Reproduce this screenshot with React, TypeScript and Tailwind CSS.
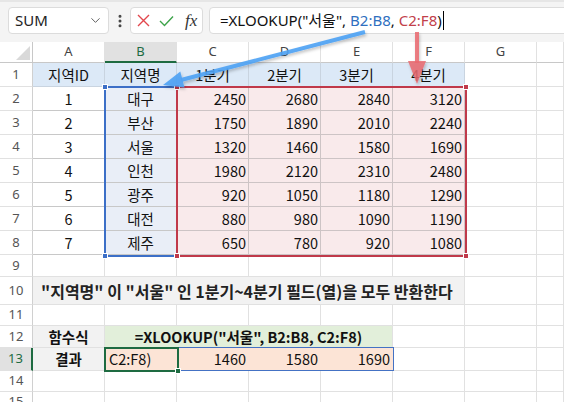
import React from "react";
import { ChevronDown, EllipsisVertical } from "lucide-react";

const rows: [number, string, number, number, number, number][] = [
  [1, "대구", 2450, 2680, 2840, 3120],
  [2, "부산", 1750, 1890, 2010, 2240],
  [3, "서울", 1320, 1460, 1580, 1690],
  [4, "인천", 1980, 2120, 2310, 2480],
  [5, "광주", 920, 1050, 1180, 1290],
  [6, "대전", 880, 980, 1090, 1190],
  [7, "제주", 650, 780, 920, 1080],
];

function RowHead({ n, active = false }: { n: number; active?: boolean }) {
  return (
    <div
      className={`w-[33px] shrink-0 flex items-center justify-center border-b border-b-[#e1e1e1] text-[13px] font-['Noto_Sans',sans-serif] ${
        active
          ? "bg-[#e1e1e1] text-[#1e6b41] border-r-2 border-r-[#1e6b41]"
          : "bg-white text-[#555] border-r border-r-[#d0d0d0]"
      }`}
    >
      {n}
    </div>
  );
}

function Blank({ last = false }: { last?: boolean }) {
  return (
    <div
      className={`${last ? "flex-1" : "w-[72px] shrink-0"} border-r border-b border-r-[#e1e1e1] border-b-[#e1e1e1] bg-white`}
    />
  );
}

function Blanks({ n }: { n: number }) {
  const arr = Array.from({ length: n });
  return (
    <>
      {arr.map((_, i) => (
        <Blank key={i} last={i === n - 1} />
      ))}
    </>
  );
}

function BlankRow({ n, h }: { n: number; h: string }) {
  return (
    <div className={`flex ${h}`}>
      <RowHead n={n} />
      <Blanks n={8} />
    </div>
  );
}

function HeadLetter({ l, active = false, last = false }: { l: string; active?: boolean; last?: boolean }) {
  return (
    <div
      className={`${last ? "flex-1" : "w-[72px] shrink-0"} flex items-center justify-center border-r border-r-[#e1e1e1] text-[13px] font-['Noto_Sans',sans-serif] ${
        active
          ? "bg-[#e1e1e1] text-[#1e6b41] border-b-2 border-b-[#1e6b41]"
          : "bg-white text-[#444] border-b border-b-[#c8c8c8]"
      }`}
    >
      {l}
    </div>
  );
}

export default function App() {
  return (
    <div className="relative w-[564px] h-[402px] overflow-hidden bg-white font-['Noto_Sans_CJK_KR',sans-serif] text-[#111]">
      {/* Formula bar */}
      <div className="h-[42px] bg-[#f4f4f4] border-t-2 border-t-[#e6e6e6] flex items-start pt-[5px] pl-[8px]">
        <div className="w-[101px] h-[27px] shrink-0 bg-white border border-[#dcdcdc] rounded-[4px] flex items-center justify-between pl-[6px] pr-[5px]">
          <span className="text-[15px] text-[#222] font-['Noto_Sans',sans-serif] leading-none">SUM</span>
          <ChevronDown size={15} strokeWidth={1.5} className="text-[#555]" />
        </div>
        <div className="w-[21px] h-[27px] shrink-0 flex items-center justify-center">
          <EllipsisVertical size={16} strokeWidth={2.5} className="text-[#444]" />
        </div>
        <div className="w-[73px] h-[27px] shrink-0 bg-white border border-[#dcdcdc] rounded-[4px] flex items-center pl-[6px] gap-[9px]">
          <svg width="13" height="13" viewBox="0 0 13 13">
            <path d="M1 1 L12 12 M12 1 L1 12" stroke="#e2474d" strokeWidth="1.4" fill="none" />
          </svg>
          <svg width="15" height="12" viewBox="0 0 15 12">
            <path d="M1 6 L5.5 10.5 L14 1.5" stroke="#3da34a" strokeWidth="1.4" fill="none" />
          </svg>
          <span className="font-['Liberation_Serif',serif] italic text-[17px] text-[#333] leading-none ml-[2px]">fx</span>
        </div>
        <div className="ml-[6px] w-[380px] h-[27px] shrink-0 bg-white border border-[#dcdcdc] rounded-[4px] flex items-center pl-[10px] text-[15px] font-['Noto_Sans','Noto_Sans_CJK_KR',sans-serif] whitespace-nowrap">
          <span className="text-[#111]">=XLOOKUP("서울", </span>
          <span className="text-[#2f6fc0] ml-[4px]">B2:B8</span>
          <span className="text-[#111]">, </span>
          <span className="text-[#c2404a] ml-[4px]">C2:F8</span>
          <span className="text-[#111]">)</span>
          <span className="w-px h-[19px] bg-black ml-[1px]" />
        </div>
      </div>

      {/* Column headers */}
      <div className="flex h-[21px]">
        <div className="w-[33px] shrink-0 bg-white border-r border-b border-r-[#c8c8c8] border-b-[#c8c8c8] flex items-end justify-end pr-[2px] pb-[2px]">
          <svg width="14" height="14" viewBox="0 0 14 14">
            <path d="M14 0 L14 14 L0 14 Z" fill="#d9d9d9" />
          </svg>
        </div>
        <HeadLetter l="A" />
        <HeadLetter l="B" active />
        <HeadLetter l="C" />
        <HeadLetter l="D" />
        <HeadLetter l="E" />
        <HeadLetter l="F" />
        <HeadLetter l="G" />
        <HeadLetter l="" last />
      </div>

      {/* Row 1 */}
      <div className="flex h-[24px] text-[14.5px]">
        <RowHead n={1} />
        {["지역ID", "지역명", "1분기", "2분기", "3분기", "4분기"].map((t) => (
          <div
            key={t}
            className="w-[72px] shrink-0 flex items-center justify-center bg-[#dce9f7] border-r border-b border-r-[#c9d4e0] border-b-[#c9d4e0]"
          >
            {t}
          </div>
        ))}
        <Blanks n={2} />
      </div>

      {/* Rows 2-8 */}
      {rows.map((r, i) => (
        <div key={i} className="flex h-[24px] text-[14.5px]">
          <RowHead n={i + 2} />
          <div className="w-[72px] shrink-0 flex items-center justify-center bg-white border-r border-b border-r-[#c8c8c8] border-b-[#c8c8c8]">
            {r[0]}
          </div>
          <div className="w-[72px] shrink-0 flex items-center justify-center bg-[#e9eef7] border-r border-b border-r-[#c8c8c8] border-b-[#c8c8c8]">
            {r[1]}
          </div>
          {r.slice(2).map((v, j) => (
            <div
              key={j}
              className="w-[72px] shrink-0 flex items-center justify-end pr-[2px] bg-[#f9eaeb] border-r border-b border-r-[#cdc4c5] border-b-[#cdc4c5]"
            >
              {v}
            </div>
          ))}
          <Blanks n={2} />
        </div>
      ))}

      <BlankRow n={9} h="h-[22px]" />

      {/* Row 10 */}
      <div className="flex h-[28px]">
        <RowHead n={10} />
        <div className="w-[432px] shrink-0 flex items-center pl-[8px] bg-[#f2f2f2] border-r border-b border-r-[#e1e1e1] border-b-[#e1e1e1] text-[16px] font-bold text-[#222] whitespace-nowrap">
          "지역명" 이 "서울" 인 1분기~4분기 필드(열)을 모두 반환한다
        </div>
        <Blanks n={2} />
      </div>

      <BlankRow n={11} h="h-[21px]" />

      {/* Row 12 */}
      <div className="flex h-[22px] text-[14.5px]">
        <RowHead n={12} />
        <div className="w-[72px] shrink-0 flex items-center justify-center bg-[#f2f2f2] border-r border-b border-r-[#e1e1e1] border-b-[#e1e1e1] font-bold">
          함수식
        </div>
        <div className="w-[288px] shrink-0 flex items-center justify-center bg-[#e2efda] border-r border-b border-r-[#e1e1e1] border-b-[#e1e1e1] font-bold whitespace-nowrap">
          =XLOOKUP("서울", B2:B8, C2:F8)
        </div>
        <Blanks n={3} />
      </div>

      {/* Row 13 */}
      <div className="flex h-[23px] text-[14.5px]">
        <RowHead n={13} active />
        <div className="w-[72px] shrink-0 flex items-center justify-center bg-[#f2f2f2] border-r border-b border-r-[#e1e1e1] border-b-[#e1e1e1] font-bold">
          결과
        </div>
        <div className="w-[72px] shrink-0 flex items-center pl-[4px] bg-[#fce4d6] border-r border-b border-r-[#fce4d6] border-b-[#e1e1e1]">
          C2:F8)
        </div>
        {[1460, 1580, 1690].map((v) => (
          <div
            key={v}
            className="w-[72px] shrink-0 flex items-center justify-end pr-[2px] bg-[#fce4d6] border-r border-b border-r-[#fce4d6] border-b-[#e1e1e1]"
          >
            {v}
          </div>
        ))}
        <Blanks n={3} />
      </div>

      <BlankRow n={14} h="h-[21px]" />
      <BlankRow n={15} h="h-[21px]" />

      {/* Overlays: range highlights */}
      <div className="absolute left-[104px] top-[86px] w-[74px] h-[171px] border-2 border-[#3c6fc7] pointer-events-none" />
      <div className="absolute left-[176px] top-[86px] w-[291px] h-[171px] border-2 border-[#c0394a] pointer-events-none" />
      <div className="absolute left-[102px] top-[84px] w-[6px] h-[6px] bg-[#3c6fc7] border border-white" />
      <div className="absolute left-[102px] top-[253px] w-[6px] h-[6px] bg-[#3c6fc7] border border-white" />
      <div className="absolute left-[174px] top-[84px] w-[6px] h-[6px] bg-[#c0394a] border border-white" />
      <div className="absolute left-[174px] top-[253px] w-[6px] h-[6px] bg-[#c0394a] border border-white" />
      <div className="absolute left-[463px] top-[84px] w-[6px] h-[6px] bg-[#c0394a] border border-white" />
      <div className="absolute left-[463px] top-[253px] w-[6px] h-[6px] bg-[#c0394a] border border-white" />

      {/* Spill range + active cell */}
      <div className="absolute left-[105px] top-[347px] w-[289px] h-[24px] border border-[#4472c4] pointer-events-none" />
      <div className="absolute left-[104px] top-[347px] w-[75px] h-[25px] border-2 border-[#1e6b41] pointer-events-none" />
      <div className="absolute left-[175px] top-[368px] w-[6px] h-[6px] bg-[#1e6b41] border border-white" />

      {/* Arrows */}
      <svg className="absolute left-0 top-0 pointer-events-none" width="564" height="402" viewBox="0 0 564 402">
        <defs>
          <filter id="sh" x="-20%" y="-20%" width="140%" height="140%">
            <feDropShadow dx="1" dy="2" stdDeviation="1.5" floodOpacity="0.25" />
          </filter>
        </defs>
        <g filter="url(#sh)">
          <line x1="365" y1="32" x2="181" y2="80" stroke="#4ea2f4" strokeWidth="4" strokeOpacity="0.9" />
          <polygon points="163,85 184.5,87.5 180.3,71.5" fill="#4ea2f4" fillOpacity="0.9" />
        </g>
        <g filter="url(#sh)">
          <line x1="417" y1="32" x2="417" y2="63" stroke="#ea6a70" strokeWidth="4" strokeOpacity="0.85" />
          <polygon points="417,84 408,61 426,61" fill="#ea6a70" fillOpacity="0.85" />
        </g>
      </svg>
    </div>
  );
}
